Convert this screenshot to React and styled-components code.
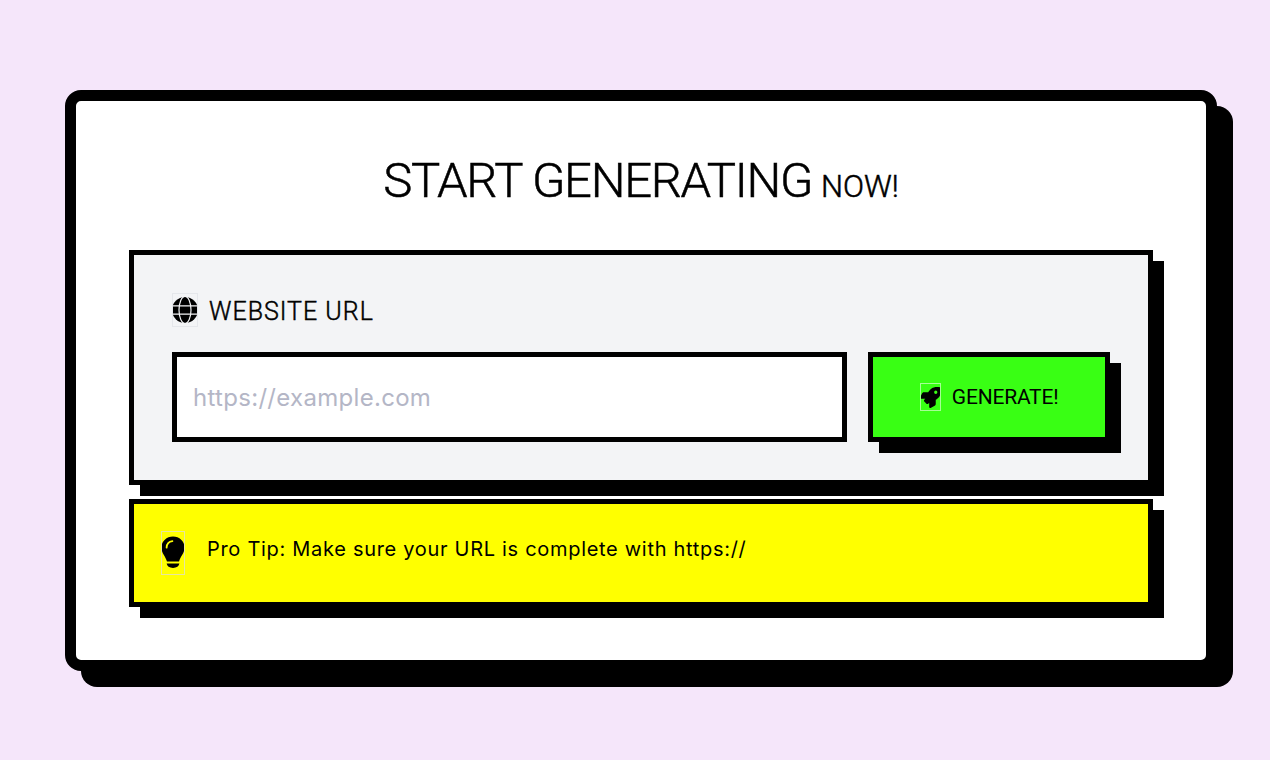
import styled, { createGlobalStyle } from "styled-components";
import { FaRocket } from "react-icons/fa";

const GlobalStyle = createGlobalStyle`
  html, body {
    margin: 0;
    height: 760px;
    overflow: hidden;
    background-color: #f5e6fa;
  }
  * {
    box-sizing: border-box;
  }
`;

const Page = styled.div`
  padding: 90px 37px 0 65px;
  font-family: "Inter", "Liberation Sans", sans-serif;
  color: #000;
`;
const Card = styled.div`
  width: 1152px;
  height: 581px;
  padding: 57px 53px 0;
  background-color: #fff;
  border: 11px solid #000;
  border-radius: 16px;
  box-shadow: 16px 16px 0 #000;
`;
const Title = styled.h1`
  margin: 0 0 46px;
  height: 46px;
  text-align: center;
  font-family: "Roboto", sans-serif;
  font-size: 49px;
  line-height: 46px;
  font-weight: 300;
  letter-spacing: -1.3px;
  white-space: nowrap;
  -webkit-text-stroke: 0.5px #000;
`;
const Now = styled.span`
  font-size: 31px;
  letter-spacing: 0;
  margin-left: -2px;
`;
const Panel = styled.section`
  width: 1024px;
  height: 235px;
  padding: 38px 38px 0;
  background-color: #f3f4f6;
  border: 5px solid #000;
  box-shadow: 11px 11px 0 #000;
`;
const Label = styled.label`
  display: flex;
  align-items: center;
  gap: 11px;
  height: 34px;
  margin-bottom: 25px;
  font-family: "Roboto", sans-serif;
  font-size: 25px;
  font-weight: 300;
  letter-spacing: 1px;
  -webkit-text-stroke: 0.45px #000;
`;
const LabelText = styled.span`
  padding-top: 3px;
`;
const IconBox = styled.span`
  display: flex;
  align-items: center;
  justify-content: center;
  flex: none;
  width: ${(p) => p.$w}px;
  height: ${(p) => p.$h}px;
  font-size: ${(p) => p.$size}px;
  outline: 1px solid ${(p) => p.$line};
  outline-offset: -1px;
`;
const TipIconBox = styled(IconBox)`
  margin-top: 7px;
`;
const Row = styled.div`
  display: flex;
  gap: 21px;
`;
const UrlInput = styled.input`
  width: 676px;
  height: 90px;
  padding: 0 16px;
  background-color: #fff;
  border: 5px solid #000;
  outline: none;
  font-family: "Inter", sans-serif;
  font-size: 24px;
  letter-spacing: 0.3px;
  &::placeholder {
    color: #b4b6c6;
    opacity: 1;
  }
`;
const GenerateButton = styled.button`
  display: flex;
  align-items: center;
  justify-content: center;
  gap: 11px;
  width: 242px;
  height: 90px;
  padding: 0;
  background-color: #39ff14;
  color: #000;
  border: 5px solid #000;
  box-shadow: 11px 11px 0 #000;
  font-family: "Roboto", sans-serif;
  font-size: 21px;
  letter-spacing: -0.2px;
`;
const Tip = styled.div`
  display: flex;
  align-items: center;
  gap: 22px;
  width: 1024px;
  height: 108px;
  margin-top: 14px;
  padding: 0 0 8px 27px;
  background-color: #ff0;
  border: 5px solid #000;
  box-shadow: 11px 11px 0 #000;
  font-size: 20px;
  letter-spacing: 0.7px;
`;

const GlobeIcon = () => (
  <svg width="26" height="26" viewBox="0 0 26 26">
    <circle cx="13" cy="13" r="13" fill="#000" />
    <g fill="none" stroke="#f3f4f6" strokeWidth="1.2">
      <path d="M0 8.8H26M0 17.2H26" />
      <ellipse cx="13" cy="13" rx="6" ry="13.5" />
    </g>
  </svg>
);

const BulbIcon = () => (
  <svg width="24" height="44" viewBox="0 0 24 44">
    <path d="M12 5.5C18.4 5.5 23.5 10.3 23.5 16.4C23.5 22.4 19.4 25 18 30.5H6C4.6 25 0.5 22.4 0.5 16.4C0.5 10.3 5.6 5.5 12 5.5Z" fill="#000" />
    <path d="M5.6 16.6C5.8 13 8 10.6 11.4 10.2" fill="none" stroke="#ff0" strokeWidth="1.8" strokeLinecap="round" />
    <path d="M5.6 32.6H18.4C18 35.2 15.6 37 12 37C8.4 37 6 35.2 5.6 32.6Z" fill="#000" />
  </svg>
);

export default function App() {
  return (
    <>
      <GlobalStyle />
      <Page>
        <Card>
          <Title>
            START GENERATING <Now>NOW!</Now>
          </Title>
          <Panel>
            <Label>
              <IconBox $w={26} $h={34} $line="#e5e7eb">
                <GlobeIcon />
              </IconBox>
              <LabelText>WEBSITE URL</LabelText>
            </Label>
            <Row>
              <UrlInput placeholder="https://example.com" />
              <GenerateButton>
                <IconBox $w={21} $h={28} $size={23} $line="#a6ff96">
                  <FaRocket />
                </IconBox>
                GENERATE!
              </GenerateButton>
            </Row>
          </Panel>
          <Tip>
            <TipIconBox $w={24} $h={44} $line="#e6e6a0">
              <BulbIcon />
            </TipIconBox>
            Pro Tip: Make sure your URL is complete with https://
          </Tip>
        </Card>
      </Page>
    </>
  );
}
